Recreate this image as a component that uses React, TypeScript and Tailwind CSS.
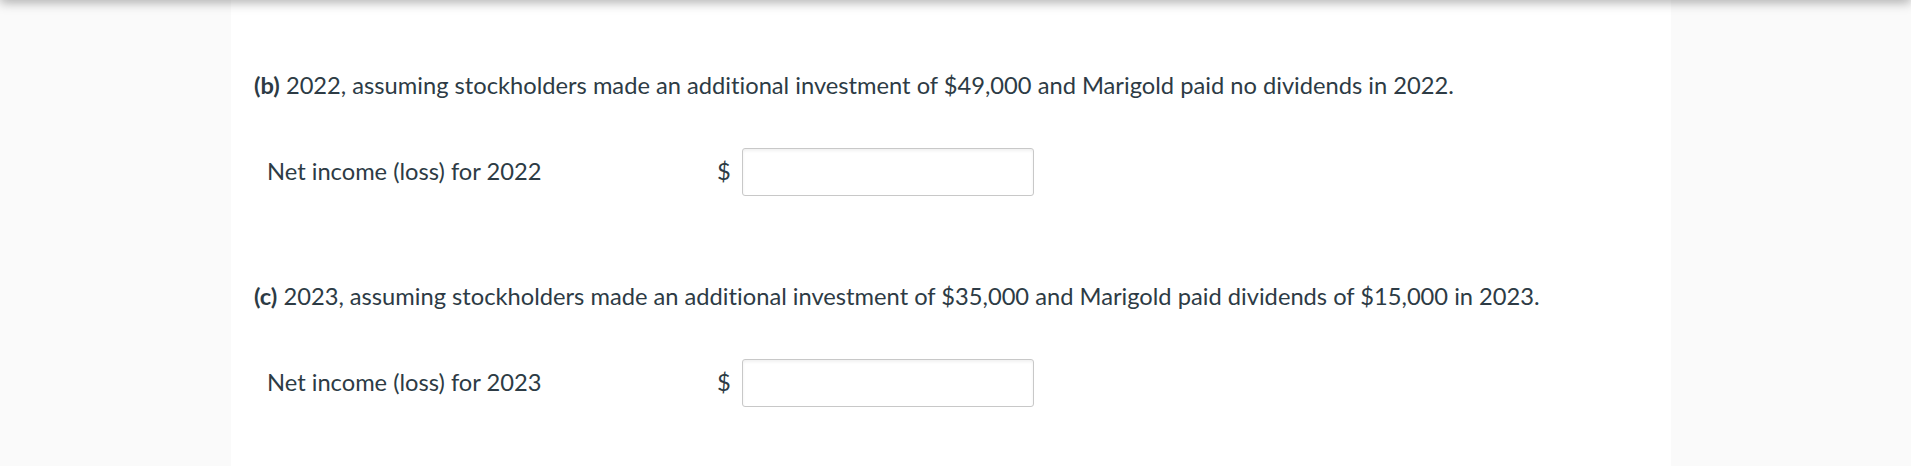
import React from 'react';

type PartProps = {
  letter: string;
  text: string;
  year: string;
  gap: string;
};

function Part({ letter, text, year, gap }: PartProps) {
  return (
    <div>
      <p className="text-[23.7px] leading-[35.5px]">
        <span className="font-bold">({letter})</span> {text}
      </p>
      <div className={`flex items-center pl-[13px] ${gap}`}>
        <label className="w-[450px] text-[23.7px]">
          Net income (loss) for {year}
        </label>
        <span className="text-[23.7px]">$</span>
        <input
          type="text"
          className="ml-[11px] w-[292px] h-[48px] bg-white border border-[#c8c8c8] rounded-[3px] shadow-[inset_0_2px_3px_rgba(0,0,0,0.06)] outline-none px-2"
        />
      </div>
    </div>
  );
}

export default function App() {
  return (
    <div
      className="relative min-h-screen h-[466px] bg-[#fafafa] overflow-hidden text-[#2d3b45] [font-variant-ligatures:none]"
      style={{ fontFamily: 'Lato, "Open Sans", sans-serif' }}
    >
      {/* Shadow from the header above */}
      <div className="absolute inset-x-0 -top-3 h-3 shadow-[0_2px_12px_rgba(0,0,0,0.35)] bg-[#bbb]" />

      <div className="ml-[231px] w-[1440px] h-full bg-white pl-[23px] pt-[68px]">
        <Part
          letter="b"
          text="2022, assuming stockholders made an additional investment of $49,000 and Marigold paid no dividends in 2022."
          year="2022"
          gap="mt-[44px]"
        />
        <div className="mt-[83px]">
          <Part
            letter="c"
            text="2023, assuming stockholders made an additional investment of $35,000 and Marigold paid dividends of $15,000 in 2023."
            year="2023"
            gap="mt-[45px]"
          />
        </div>
      </div>
    </div>
  );
}
